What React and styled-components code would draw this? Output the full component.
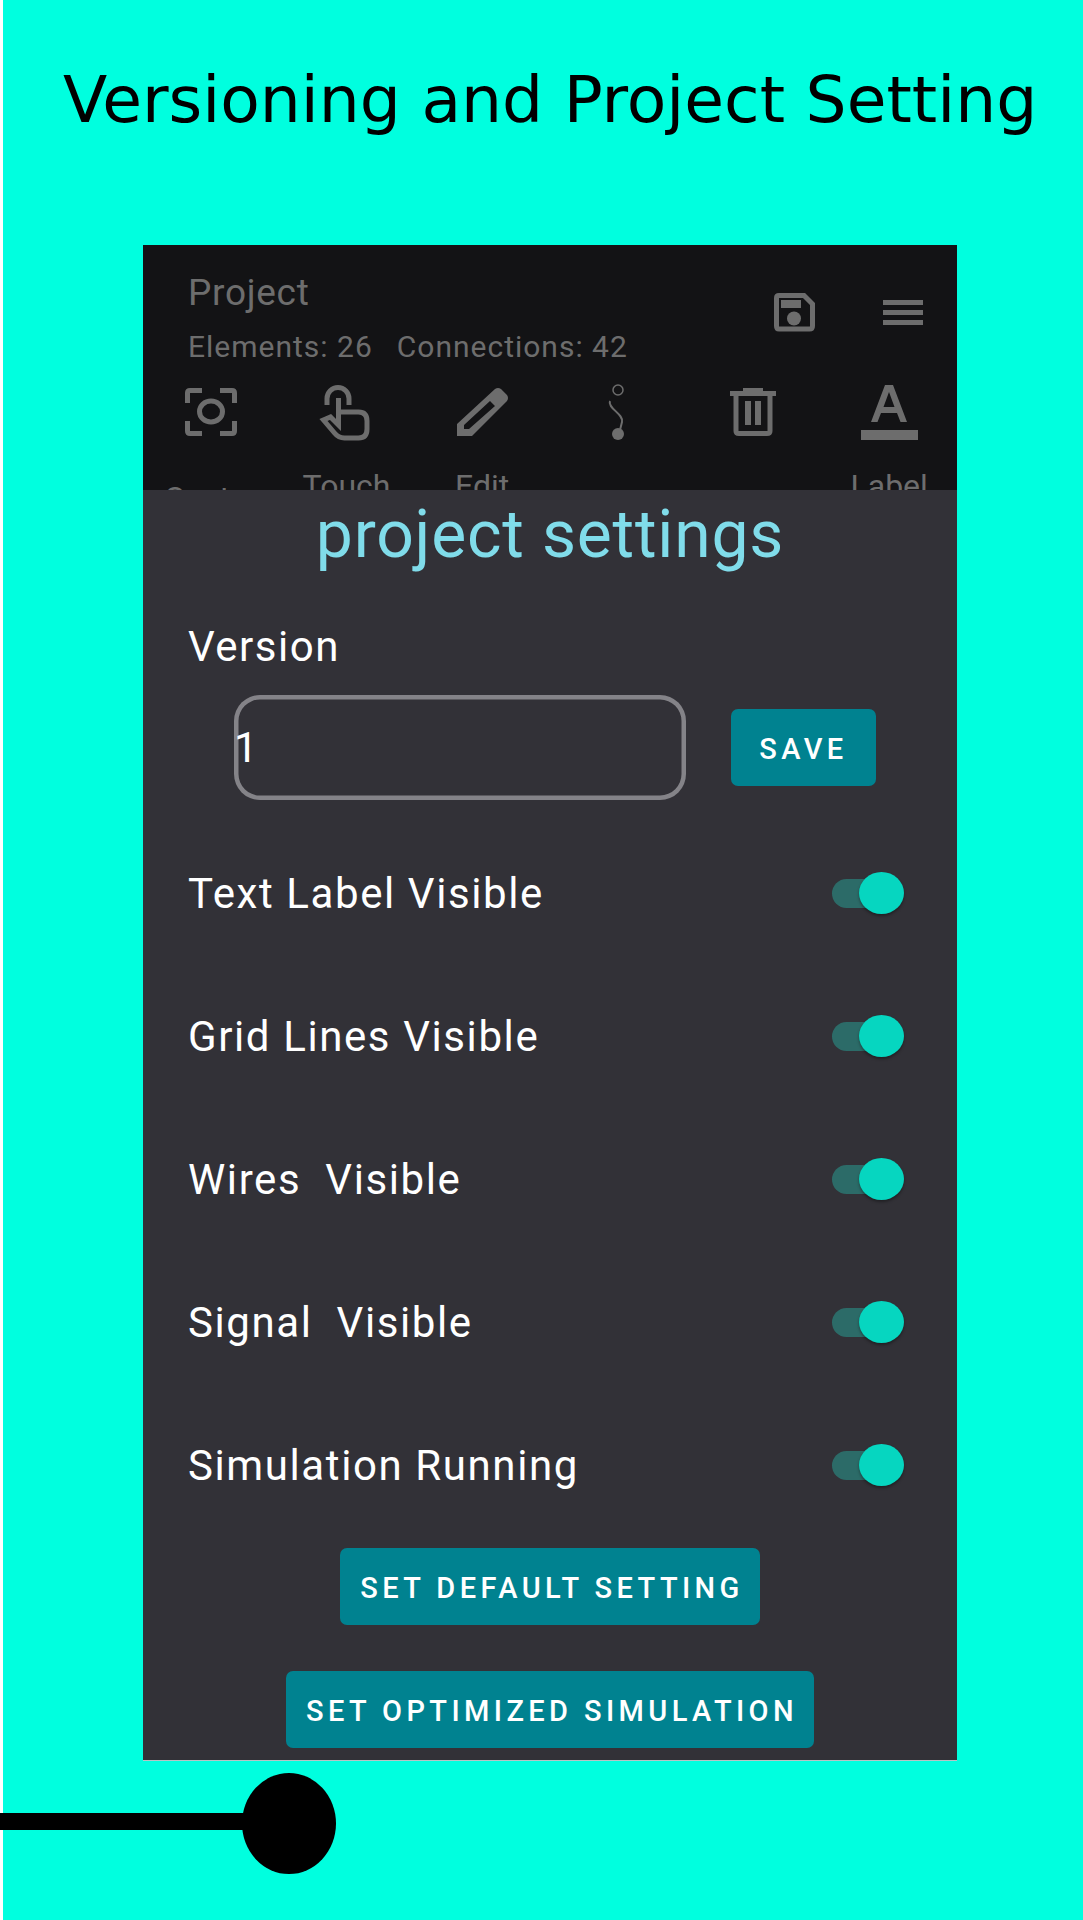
import React from 'react';
import styled, { createGlobalStyle } from 'styled-components';

const GlobalStyle = createGlobalStyle`
  html, body {
    margin: 0;
    padding: 0;
    background: #fff;
  }
  * {
    box-sizing: border-box;
  }
`;

const Page = styled.div`
  width: 1083px;
  height: 1920px;
  overflow: hidden;
  background: linear-gradient(90deg, #fff 3px, #00ffdf 3px);
`;

const Title = styled.h1`
  margin: 0;
  height: 245px;
  padding: 62px 0 0 63px;
  font: 400 64.7px/76px "DejaVu Sans", sans-serif;
  color: #000;
  white-space: nowrap;
`;

const Panel = styled.div`
  width: 814px;
  margin-left: 143px;
  border-bottom: 1px solid #b9c4c6;
`;

const Header = styled.header`
  height: 245px;
  overflow: hidden;
  background: #131315;
  color: #6d6d6d;
  font-family: Roboto, sans-serif;
`;

const TopRow = styled.div`
  height: 137px;
  display: flex;
  justify-content: space-between;
  padding: 31px 34px 0 45px;
`;

const ProjectName = styled.div`
  font-size: 37px;
  line-height: 34px;
  letter-spacing: 0.7px;
`;

const Counts = styled.div`
  display: flex;
  gap: 24px;
  margin-top: 20px;
  font-size: 30px;
  line-height: 34px;
  letter-spacing: 1px;
`;

const TopIcons = styled.div`
  display: flex;
  gap: 68px;
  align-items: center;
  height: 39px;
  margin-top: 17px;
`;

const Tools = styled.div`
  display: grid;
  grid-template-columns: repeat(6, 1fr);
`;

const Tool = styled.div`
  display: flex;
  flex-direction: column;
  align-items: center;
`;

const ToolIcon = styled.div`
  height: 60px;
  display: flex;
  align-items: center;
  justify-content: center;

  svg {
    overflow: visible;
  }
`;

const ToolLabel = styled.span`
  margin-top: ${(p) => (p.$low ? 37 : 25)}px;
  font-size: 32px;
  line-height: 38px;
`;

const Sheet = styled.section`
  background: #323137;
  color: #fff;
  font-family: Roboto, sans-serif;
  padding-bottom: 12px;
`;

const Heading = styled.h2`
  margin: 0;
  height: 110px;
  padding-top: 10px;
  text-align: center;
  font-size: 66px;
  line-height: 70px;
  font-weight: 400;
  letter-spacing: 0.8px;
  color: #80dcea;
`;

const VersionLabel = styled.div`
  margin: 20px 0 0 45px;
  font-size: 42px;
  line-height: 54px;
  letter-spacing: 1.5px;
`;

const VersionRow = styled.div`
  display: flex;
  align-items: center;
  gap: 45px;
  margin: 21px 0 22px 91px;
`;

const VersionInput = styled.input`
  width: 452px;
  height: 105px;
  padding: 0;
  border: 0;
  border-radius: 26px;
  box-shadow: inset 0 0 0 4.5px #848388;
  outline: none;
  background: transparent;
  color: #fff;
  font: 400 42px Roboto, sans-serif;
`;

const Button = styled.button`
  display: block;
  height: 77px;
  padding: 2px 16px 0 20px;
  border: 0;
  border-radius: 7px;
  background: #008290;
  color: #fff;
  font: 500 29px Roboto, sans-serif;
  letter-spacing: 4.4px;
  white-space: nowrap;
`;

const SaveButton = styled(Button)`
  width: 145px;
  padding: 2px 0 0;
`;

const WideButton = styled(Button)`
  margin: ${(p) => p.$top}px auto 0;
`;

const SettingRow = styled.div`
  height: 143px;
  display: flex;
  align-items: center;
  justify-content: space-between;
  padding: 0 62px 0 45px;
  font-size: 42px;
  letter-spacing: 1.6px;
  white-space: pre;
`;

const Track = styled.div`
  position: relative;
  width: 63px;
  height: 29px;
  border-radius: 15px;
  background: #2c6b68;
`;

const Thumb = styled.div`
  position: absolute;
  top: -7px;
  right: -9px;
  width: 45px;
  height: 42px;
  border-radius: 50%;
  background: #06d6c0;
  box-shadow: 0 2px 3px rgba(0, 0, 0, 0.35);
`;

const Slider = styled.svg`
  display: block;
  margin-top: 12px;
`;

const Switch = () => (
  <Track>
    <Thumb />
  </Track>
);

const GRAY = '#6d6d6d';

const SaveIcon = () => (
  <svg width="41" height="39" viewBox="0 0 41 39">
    <path d="M5 2.5H30L38.5 11V33Q38.5 36 35.5 36H5Q2.5 36 2.5 33V5Q2.5 2.5 5 2.5Z" fill="none" stroke={GRAY} strokeWidth="5" />
    <rect x="7" y="7" width="20" height="8" fill={GRAY} />
    <circle cx="20" cy="25.5" r="7" fill={GRAY} />
  </svg>
);

const MenuIcon = () => (
  <svg width="40" height="25" viewBox="0 0 40 25">
    <rect width="40" height="5" fill={GRAY} />
    <rect y="10" width="40" height="5" fill={GRAY} />
    <rect y="20" width="40" height="5" fill={GRAY} />
  </svg>
);

const FocusIcon = () => (
  <svg width="52" height="48" viewBox="0 0 52 48" fill="none" stroke={GRAY} strokeWidth="5">
    <path d="M2.5 15V5Q2.500 2.500 5 2.500H17M35 2.500H47Q49.500 2.500 49.500 5V15M49.500 33V43Q49.500 45.500 47 45.500H35M17 45.500H5Q2.500 45.500 2.500 43V33" />
    <ellipse cx="26" cy="23.500" rx="11.500" ry="10.500" />
  </svg>
);

const TouchIcon = () => (
  <svg width="49" height="55" viewBox="1.5 0 49 55" fill="none" stroke={GRAY} strokeWidth="5">
    <path d="M6.500 20V13.500A11 11 0 0 1 28.500 13.500V20" />
    <path d="M18 13V40L10 32L3 35L14 48Q18 53 24 53H38Q46.500 53 46.500 44V36Q46.500 27 38 27H18" />
  </svg>
);

const PencilIcon = () => (
  <svg width="51" height="48" viewBox="0 0 51 48">
    <path
      fillRule="evenodd"
      fill={GRAY}
      d="M0 48V36L38 1Q41 -1 44 1L50 7Q52 10 50 13L15 48ZM7 41H12L38 18L33 13L7 37Z"
    />
  </svg>
);

const WireIcon = () => (
  <svg width="18" height="56" viewBox="2 0 18 56" fill="none" stroke={GRAY}>
    <circle cx="11" cy="6" r="5" strokeWidth="1.5" />
    <path d="M3 17C0 24 17 30 15 38L13 46" strokeWidth="2" />
    <circle cx="11" cy="50" r="6" fill={GRAY} stroke="none" />
  </svg>
);

const TrashIcon = () => (
  <svg width="46" height="48" viewBox="0 0 46 48" fill={GRAY}>
    <rect x="13" width="20" height="4" />
    <rect y="3" width="46" height="5" />
    <path d="M6 8V43Q6 45.500 9 45.500H37Q40 45.500 40 43V8" fill="none" stroke={GRAY} strokeWidth="5" />
    <rect x="15" y="13" width="6" height="24" />
    <rect x="25" y="13" width="6" height="24" />
  </svg>
);

const LabelIcon = () => (
  <svg width="57" height="55" viewBox="0 0 57 55" fill={GRAY}>
    <path fillRule="evenodd" d="M24 0H32L46 37H39.500L36 28H20L16.500 37H10ZM22.500 22H33.500L28 7Z" />
    <rect y="45" width="57" height="10" />
  </svg>
);

const tools = [
  { icon: <FocusIcon />, label: 'Center', low: true },
  { icon: <TouchIcon />, label: 'Touch' },
  { icon: <PencilIcon />, label: 'Edit' },
  { icon: <WireIcon />, label: '' },
  { icon: <TrashIcon />, label: '' },
  { icon: <LabelIcon />, label: 'Label' },
];

const settings = ['Text Label Visible', 'Grid Lines Visible', 'Wires  Visible', 'Signal  Visible', 'Simulation Running'];

const App = () => (
  <Page>
    <GlobalStyle />
    <Title>Versioning and Project Setting</Title>
    <Panel>
      <Header>
        <TopRow>
          <div>
            <ProjectName>Project</ProjectName>
            <Counts>
              <span>Elements: 26</span>
              <span>Connections: 42</span>
            </Counts>
          </div>
          <TopIcons>
            <SaveIcon />
            <MenuIcon />
          </TopIcons>
        </TopRow>
        <Tools>
          {tools.map((t, i) => (
            <Tool key={i}>
              <ToolIcon>{t.icon}</ToolIcon>
              <ToolLabel $low={t.low}>{t.label}</ToolLabel>
            </Tool>
          ))}
        </Tools>
      </Header>
      <Sheet>
        <Heading>project settings</Heading>
        <VersionLabel>Version</VersionLabel>
        <VersionRow>
          <VersionInput defaultValue="1" />
          <SaveButton>SAVE</SaveButton>
        </VersionRow>
        {settings.map((s) => (
          <SettingRow key={s}>
            <span>{s}</span>
            <Switch />
          </SettingRow>
        ))}
        <WideButton $top={11}>SET DEFAULT SETTING</WideButton>
        <WideButton $top={46}>SET OPTIMIZED SIMULATION</WideButton>
      </Sheet>
    </Panel>
    <Slider width="340" height="102" viewBox="0 0 340 102">
      <rect y="40" width="271" height="17" fill="#000" />
      <ellipse cx="289" cy="50.500" rx="47" ry="50.500" fill="#000" />
    </Slider>
  </Page>
);

export default App;
